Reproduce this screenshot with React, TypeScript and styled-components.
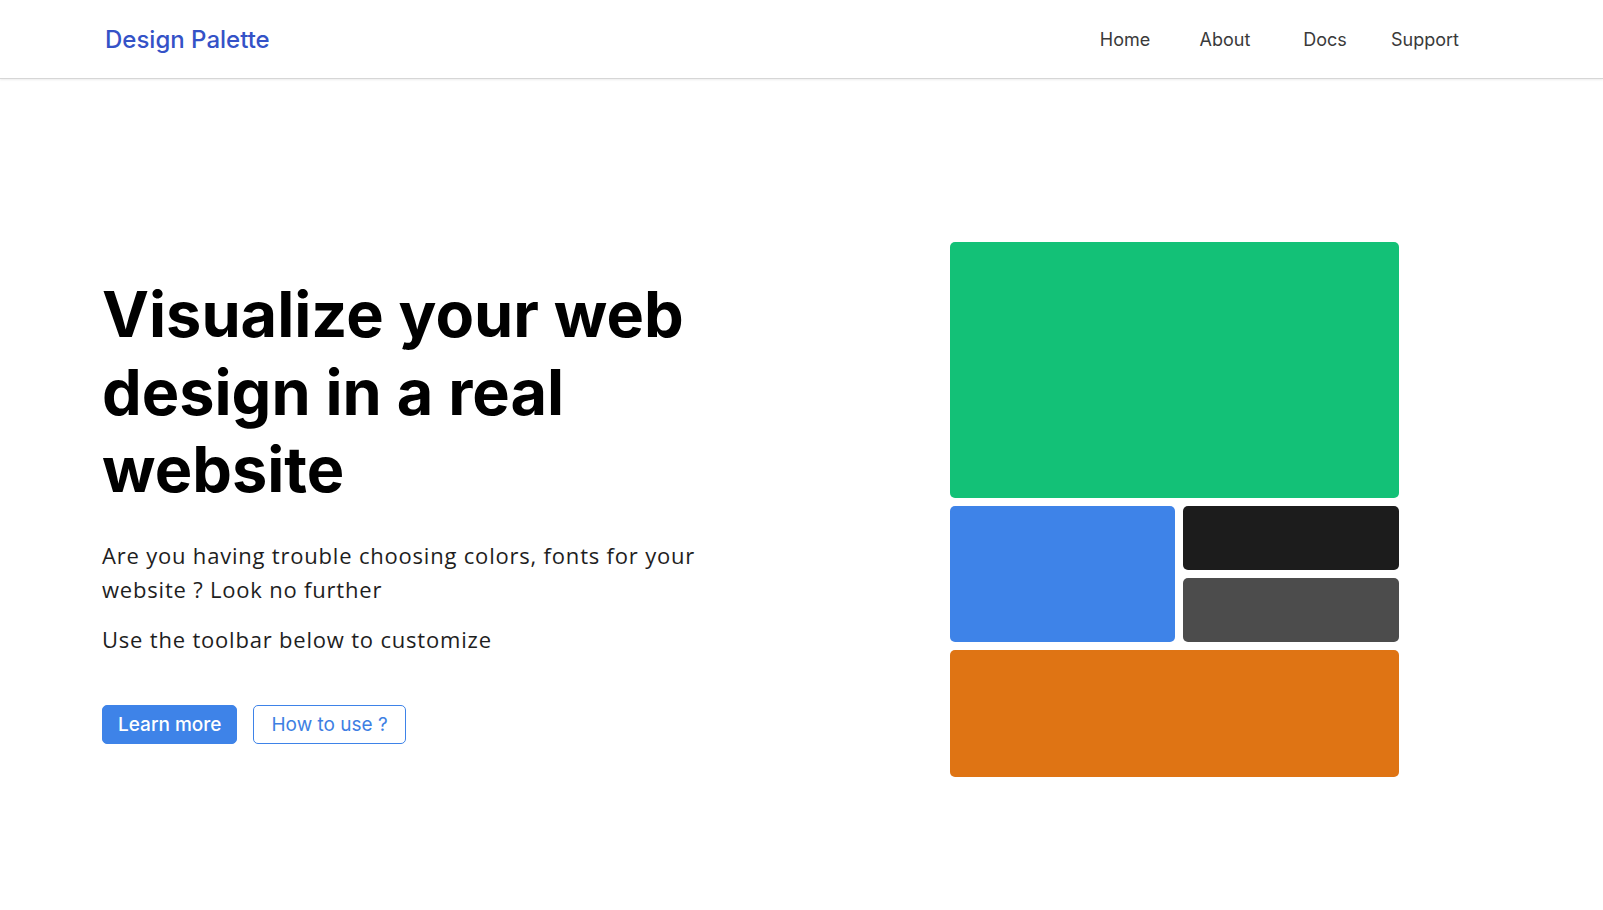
import React from "react";
import styled, { createGlobalStyle } from "styled-components";

const GlobalStyle = createGlobalStyle`
  * { box-sizing: border-box; }
  html, body { margin: 0; padding: 0; background: #ffffff; }
  body { font-family: Inter, "Liberation Sans", sans-serif; color: #111; }
`;

const Header = styled.header`
  height: 79px;
  display: flex;
  align-items: center;
  justify-content: space-between;
  padding: 0 128px 0 105px;
  border-bottom: 1px solid #d6d6d6;
  box-shadow: 0 1px 2px rgba(0, 0, 0, 0.08);
`;

const Logo = styled.a`
  font-family: Inter, sans-serif;
  font-size: 24px;
  font-weight: 500;
  color: #3452c7;
  text-decoration: none;
`;

const Nav = styled.nav`
  display: flex;
`;

const NavLink = styled.a`
  width: 100px;
  text-align: center;
  font-family: Inter, sans-serif;
  font-size: 18px;
  color: #3a3a3a;
  text-decoration: none;
`;

const Hero = styled.main`
  display: flex;
  justify-content: space-between;
  align-items: flex-start;
  padding: 163px 204px 0 102px;
`;

const Copy = styled.section`
  width: 640px;
  padding-top: 34px;
`;

const Title = styled.h1`
  margin: 0 0 29px;
  font-family: Inter, sans-serif;
  font-size: 63px;
  font-weight: 700;
  line-height: 77.5px;
  color: #000;
`;

const Text = styled.p`
  margin: 0 0 16px;
  font-family: "Open Sans", sans-serif;
  font-size: 22px;
  letter-spacing: 0.8px;
  line-height: 34px;
  color: #1e1e1e;
`;

const Actions = styled.div`
  display: flex;
  gap: 16px;
  margin-top: 49px;
`;

const Button = styled.button<{ $outline?: boolean }>`
  height: 39px;
  padding: 0 ${(p) => (p.$outline ? 17 : 15)}px;
  border-radius: 5px;
  font-family: Inter, sans-serif;
  font-size: 19px;
  font-weight: ${(p) => (p.$outline ? 400 : 500)};
  cursor: pointer;
  border: 1px solid #3e83e8;
  background: ${(p) => (p.$outline ? "#ffffff" : "#3e83e8")};
  color: ${(p) => (p.$outline ? "#3e7fe3" : "#ffffff")};
`;

const Palette = styled.div`
  width: 449px;
  display: grid;
  grid-template-columns: 225px 216px;
  grid-template-rows: 256px 64px 64px 127px;
  gap: 8px;
`;

const Swatch = styled.div<{ $color: string; $area: string }>`
  background: ${(p) => p.$color};
  border-radius: 5px;
  grid-area: ${(p) => p.$area};
`;

export default function App() {
  return (
    <>
      <GlobalStyle />
      <Header>
        <Logo href="#">Design Palette</Logo>
        <Nav>
          <NavLink href="#">Home</NavLink>
          <NavLink href="#">About</NavLink>
          <NavLink href="#">Docs</NavLink>
          <NavLink href="#">Support</NavLink>
        </Nav>
      </Header>
      <Hero>
        <Copy>
          <Title>Visualize your web design in a real website</Title>
          <Text>Are you having trouble choosing colors, fonts for your website ? Look no further</Text>
          <Text>Use the toolbar below to customize</Text>
          <Actions>
            <Button>Learn more</Button>
            <Button $outline>How to use ?</Button>
          </Actions>
        </Copy>
        <Palette>
          <Swatch $color="#13c177" $area="1 / 1 / 2 / 3" />
          <Swatch $color="#3e83e8" $area="2 / 1 / 4 / 2" />
          <Swatch $color="#1c1c1c" $area="2 / 2 / 3 / 3" />
          <Swatch $color="#4c4c4c" $area="3 / 2 / 4 / 3" />
          <Swatch $color="#df7414" $area="4 / 1 / 5 / 3" />
        </Palette>
      </Hero>
    </>
  );
}
